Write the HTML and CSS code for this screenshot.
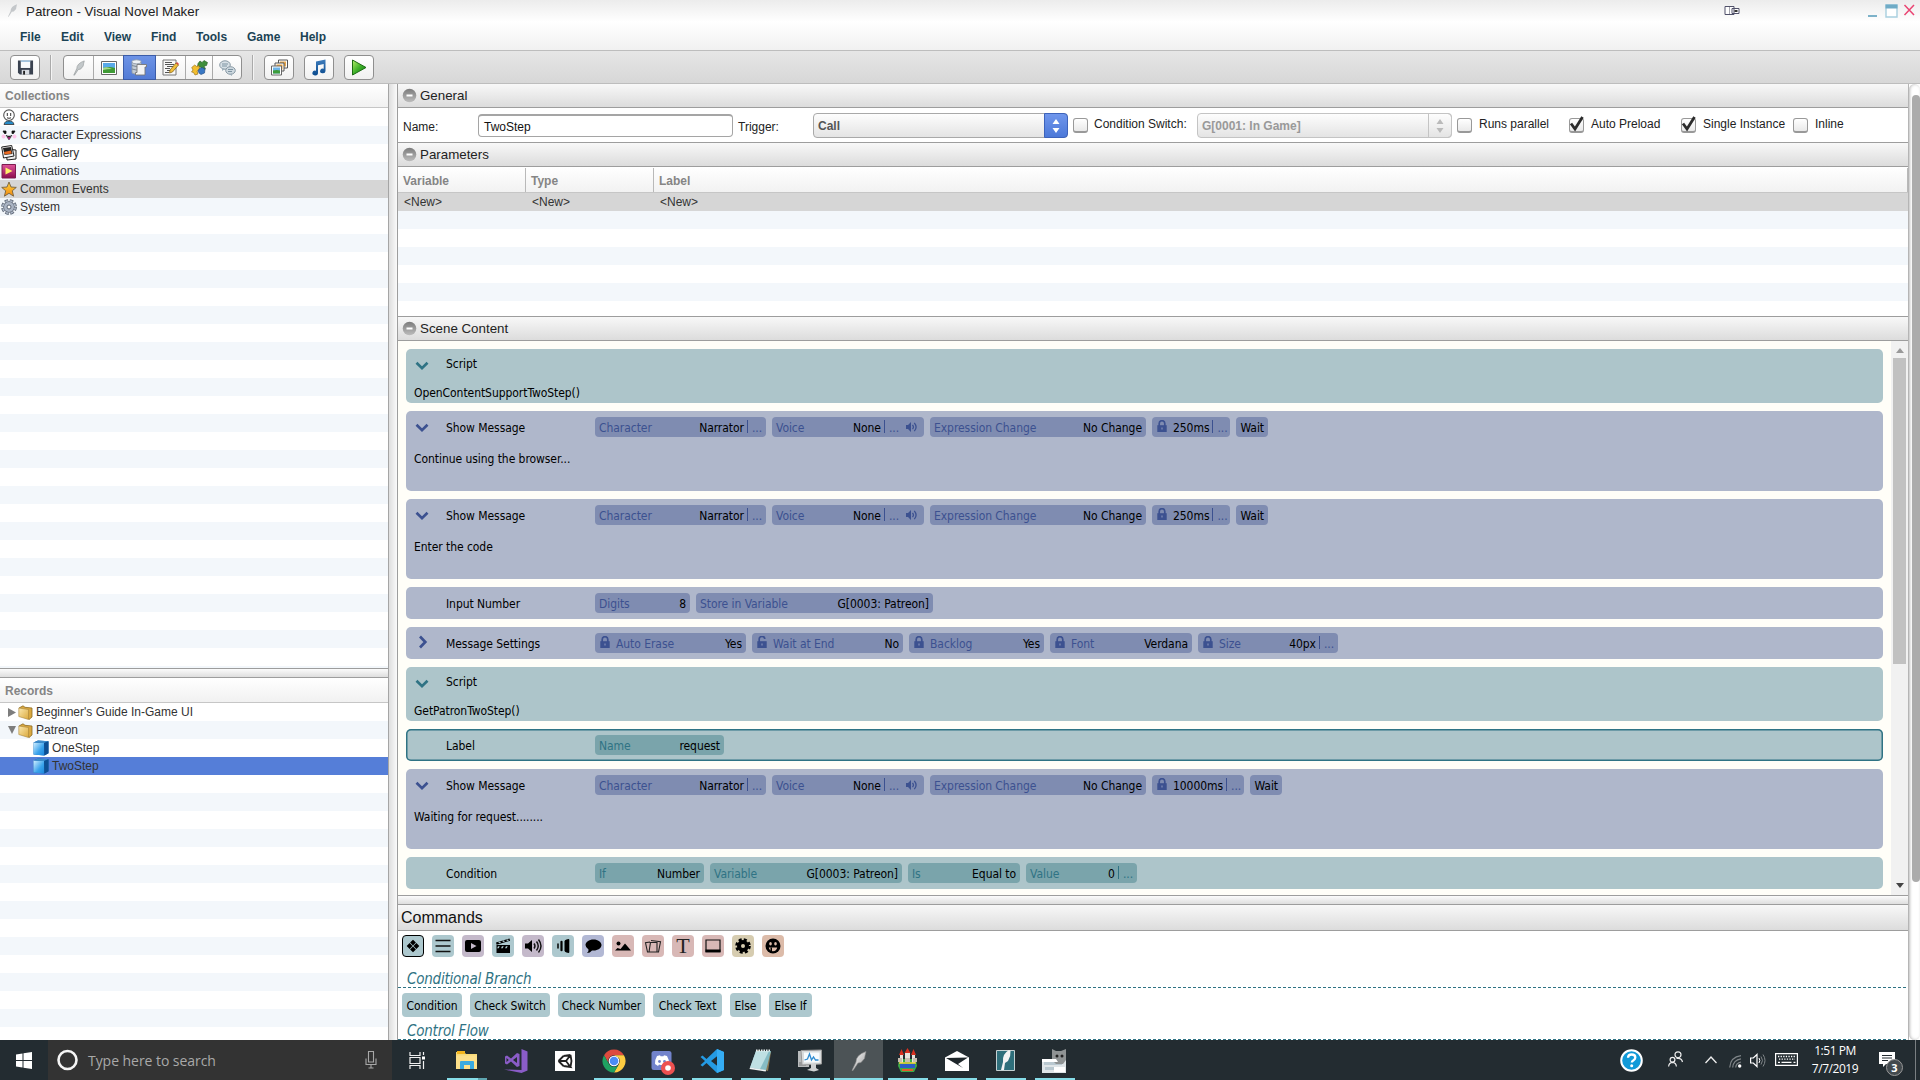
FILE: index.html
```
<!DOCTYPE html>
<html lang="en">
<head>
<meta charset="utf-8">
<title>Patreon - Visual Novel Maker</title>
<link rel="stylesheet" href="styles.css">
</head>
<body>
<svg class="defs" width="0" height="0">
  <defs>
    <linearGradient id="g-play" x1="0" y1="0" x2="1" y2="1"><stop offset="0" stop-color="#b6f06a"/><stop offset=".5" stop-color="#3fb12a"/><stop offset="1" stop-color="#0d7a10"/></linearGradient>
    <linearGradient id="g-note" x1="0" y1="0" x2="0" y2="1"><stop offset="0" stop-color="#3f7dbd"/><stop offset="1" stop-color="#0a4b8e"/></linearGradient>
    <linearGradient id="g-cube" x1="0" y1="0" x2="1" y2="1"><stop offset="0" stop-color="#d3efff"/><stop offset=".6" stop-color="#3aa3ec"/><stop offset="1" stop-color="#1c86dc"/></linearGradient>
    <linearGradient id="g-folder" x1="0" y1="0" x2="1" y2="1"><stop offset="0" stop-color="#fbe9b0"/><stop offset="1" stop-color="#dba93c"/></linearGradient>
    <linearGradient id="g-anim" x1="0" y1="0" x2="0" y2="1"><stop offset="0" stop-color="#e0559b"/><stop offset="1" stop-color="#8c0d4e"/></linearGradient>
    <linearGradient id="g-star" x1="0" y1="0" x2="0" y2="1"><stop offset="0" stop-color="#ffd23c"/><stop offset="1" stop-color="#f18a12"/></linearGradient>
    <linearGradient id="g-feather" x1="0" y1="0" x2="1" y2="1"><stop offset="0" stop-color="#fff"/><stop offset="1" stop-color="#9a9a9a"/></linearGradient>
    <linearGradient id="g-minus" x1="0" y1="0" x2="0" y2="1"><stop offset="0" stop-color="#7b7b7b"/><stop offset="1" stop-color="#bdbdbd"/></linearGradient>
  </defs>
  <symbol id="chev-down" viewBox="0 0 14 10"><path d="M1.500 1.800 7 7.200l5.500-5.400" fill="none" stroke="currentColor" stroke-width="2.700"/></symbol>
  <symbol id="chev-right" viewBox="0 0 10 14"><path d="M2 1.500 7.300 7 2 12.500" fill="none" stroke="currentColor" stroke-width="2.700"/></symbol>
  <symbol id="lock" viewBox="0 0 10 12"><path d="M2.200 6V3.500a2.800 2.800 0 0 1 5.600 0V6" fill="none" stroke="currentColor" stroke-width="1.700"/><path d="M.3 5.200h9.400V12H.3z" fill="currentColor"/><path d="M4.500 7.500h1v2h-1z" fill="#8f9bc0"/></symbol>
  <symbol id="unlock" viewBox="0 0 10 12"><path d="M2.200 6V3.500a2.800 2.800 0 0 1 5.600-.5" fill="none" stroke="currentColor" stroke-width="1.700"/><path d="M.3 5.200h9.400V12H.3z" fill="currentColor"/><path d="M4.500 7.500h1v2h-1z" fill="#8f9bc0"/></symbol>
  <symbol id="sound" viewBox="0 0 12 12"><path d="M0 4h2l3-3v10L2 8H0z" fill="currentColor"/><path d="M6.500 3.800q1.800 2.200 0 4.400M8.300 1.800q3.600 4.200 0 8.400" fill="none" stroke="currentColor" stroke-width="1.300"/></symbol>
  <symbol id="minus" viewBox="0 0 15 15"><circle cx="7.500" cy="7.500" r="6.800" fill="url(#g-minus)"/><rect x="4.500" y="6.500" width="6" height="2" fill="#fff"/></symbol>
  <symbol id="check" viewBox="0 0 18 20"><path d="M4 9.500 8 15 15.500 3" fill="none" stroke="#2b2b2b" stroke-width="2.800"/></symbol>
  <symbol id="feather" viewBox="0 0 16 20"><path d="M1 19.500 5 11q0-7 10-10.500-1 4-1.500 7l-3.500 4-3 .5-5 7.500z" fill="url(#g-feather)" stroke="#8b8b8b" stroke-width=".6"/></symbol>
  <symbol id="folder" viewBox="0 0 15 15"><path d="M1 3 5 .8l2 1.500 7 .7V12l-3 2.500z" fill="#d9a840" stroke="#8b6a22" stroke-width=".8"/><path d="M.8 3 10.500 4.500v10L.8 11.500z" fill="url(#g-folder)" stroke="#a8853a" stroke-width=".6"/></symbol>
  <symbol id="cube" viewBox="0 0 16 16"><path d="M.5 2.500 5 .5l10.500.8v12L11.500 15.500.5 14.500z" fill="#1766ad"/><path d="M.5 2.500 11 3v12.500L.5 14.500z" fill="url(#g-cube)"/><path d="M.5 2.500 5 .5l10.500.8L11 3z" fill="#3c8ccc"/><path d="M11 3l4.500-1.700v12L11.500 15.500z" fill="#0d4f93"/></symbol>
</svg>

<div class="window">
  <header class="titlebar">
    <svg class="app-icon" width="11" height="13" viewBox="0 0 16 20"><path d="M1 19.500 5 11q0-7 10-10.500-1 4-1.500 7l-3.500 4-3 .5-5 7.500z" fill="#c4c7ca"/></svg>
    <span class="title">Patreon - Visual Novel Maker</span>
    <svg class="tablet" width="16" height="11" viewBox="0 0 16 11"><path d="M1 1.500h9v8H1zM8 3.500h7v5H8z" fill="#fff" stroke="#50516a"/><path d="M5.500 2v7" stroke="#a5a5ae"/><path d="M10.500 5h3v2h-3z" fill="#333"/></svg>
    <svg class="winbtns" width="48" height="14" viewBox="0 0 48 14"><path d="M1 11h9v2H1z" fill="#7db2c9"/><path d="M19 1h11v12H19z" fill="#fff" stroke="#a8cfdf" stroke-width="1.400"/><path d="M18.500.5h12v4h-12z" fill="#6fabc6"/><path d="M37.500 1 47 11M47 1l-9.500 10" stroke="#ea4472" stroke-width="1.500"/></svg>
  </header>
  <nav class="menubar"><span class="m-file">File</span><span class="m-edit">Edit</span><span class="m-view">View</span><span class="m-find">Find</span><span class="m-tools">Tools</span><span class="m-game">Game</span><span>Help</span></nav>

  <div class="toolbar">
    <button class="tbtn"><svg width="17" height="17" viewBox="0 0 18 17"><path d="M1 1h16v15H3l-2-2z" fill="#3a4250"/><path d="M4 1h10v8H4z" fill="#f7f9fb"/><path d="M4 1h10v1.500H4z" fill="#8fb7d8"/><path d="M5 11h8v5H5z" fill="#d8dce2"/><path d="M6.500 12h2v4h-2z" fill="#222"/></svg></button>
    <i class="sep"></i>
    <div class="tgroup">
      <button><svg width="12" height="16" viewBox="0 0 16 20"><path d="M1 19.500 5 11q0-7 10-10.500-1 4-1.500 7l-3.500 4-3 .5-5 7.500z" fill="#c3c8ca" stroke="#8e9396" stroke-width=".8"/></svg></button>
      <button><svg width="16" height="14" viewBox="0 0 16 14"><path d="M.5.500h15v13H.5z" fill="#fff" stroke="#666"/><path d="M2 2h12v10H2z" fill="#58a9e8"/><path d="M2 7q6-2 12 0v5H2z" fill="#3f9a35"/><path d="M2 7q4-2 9 1-5 0-9 1z" fill="#a8d98c"/></svg></button>
      <button class="on"><svg width="16" height="17" viewBox="0 0 16 17"><path d="M1 3v11q4 2.500 9 0V3z" fill="#c3cbd4" stroke="#8e99a6" stroke-width=".8"/><ellipse cx="5.500" cy="2.800" rx="4.600" ry="2" fill="#edf1f5" stroke="#8e99a6" stroke-width=".8"/><path d="M1 6.500q4 2 9 0M1 10q4 2 9 0" fill="none" stroke="#7d8894"/><path d="M6 5.500h9.500V8H14v8H4.500v-2.500H6z" fill="#f3f3f3" stroke="#777" stroke-width=".9"/></svg></button>
      <button><svg width="17" height="17" viewBox="0 0 17 17"><path d="M1 1h13v15H1z" fill="#f8f8f8" stroke="#777"/><path d="M3 3.500h7M3 5.500h9M5 7.500h7M3 9.500h5M5 11.500h4M3 13.500h4" stroke="#555"/><path d="m8 11 6-7 2.500 2-6 7-3 1z" fill="#f1bf3b" stroke="#7b5a16" stroke-width=".7"/><path d="m14 4 1-1 2 2-.8 1z" fill="#d44"/></svg></button>
      <button><svg width="17" height="16" viewBox="0 0 17 16"><path d="M7 3.500 9 1l2 1.500L13 .5l3.500 2-1 3L13 6l1.500 3-3 1-2-3-3 0z" fill="#3f8f3c" stroke="#245a22" stroke-width=".6"/><path d="m.7 7.500 3-2.500 2 1.500L8 5.500l.5 4L6 11l1 3-3 1-1.500-2.500-2-.5L2 10z" fill="#f2be2f" stroke="#8a6510" stroke-width=".6"/><path d="m8 9 3-1.500 3 1.500-.5 4L10 14.500 8 13l-.800-2z" fill="#3978c4" stroke="#1d4780" stroke-width=".6"/></svg></button>
      <button><svg width="17" height="16" viewBox="0 0 17 16"><ellipse cx="6" cy="5" rx="5.300" ry="4.200" fill="#d7e0e6" stroke="#8a9aa5"/><path d="M3 8v3l3-2z" fill="#9fb0bb"/><path d="M3 4h6M3 6h5" stroke="#7d93a1"/><ellipse cx="11.500" cy="10.500" rx="4.800" ry="3.800" fill="#cdd8df" stroke="#8a9aa5"/><path d="M13 13.500v2.500l-3-2z" fill="#9fb0bb"/><path d="M9 9.500h5M9 11.500h4" stroke="#7d93a1"/></svg></button>
    </div>
    <i class="sep sep2"></i>
    <button class="tbtn"><svg width="17" height="17" viewBox="0 0 17 17"><path d="M7.500 1h9v8h-9z" fill="#fff" stroke="#555"/><path d="M9 2.500h6v5H9z" fill="#e8a94e"/><path d="M4 4h9v8H4z" fill="#fff" stroke="#555"/><path d="M5.500 5.500h6v5h-6z" fill="#f0a53a"/><path d="M.5 7h10v9H.5z" fill="#fff" stroke="#666"/><path d="M2 8.500h7v6H2z" fill="#6db5e8"/><path d="M2 11.500q4-1 7 0v3H2z" fill="#3e9c3b"/></svg></button>
    <button class="tbtn"><svg width="16" height="17" viewBox="0 0 16 17"><path d="M5 2.500 14.500.5v11.500a2.700 2.300 0 1 1-1.800-2.200V5L7 6.200V14a2.800 2.400 0 1 1-2-2.300z" fill="url(#g-note)"/></svg></button>
    <button class="tbtn"><svg width="16" height="17" viewBox="0 0 16 17"><path d="M1.500 1 15 8.500 1.500 16z" fill="url(#g-play)" stroke="#1c6b14"/></svg></button>
  </div>

  <div class="body">
    <aside class="left">
      <div class="lhead">Collections</div>
      <ul class="list collections">
        <li><svg width="16" height="16" viewBox="0 0 16 16"><path d="M3 15.500q1-4 5-3.500 4-.5 5 3.500z" fill="#258bc8" stroke="#333" stroke-width=".8"/><circle cx="8" cy="6.200" r="5.300" fill="#fff" stroke="#555" stroke-width="1.100"/><path d="M6.300 4v3M9.700 4v3M6 8.800q2 1 4 0" stroke="#333" fill="none"/></svg>Characters</li>
        <li><svg width="16" height="16" viewBox="0 0 16 16"><circle cx="2.500" cy="9.500" r="2" fill="#ffc5ea"/><circle cx="13.500" cy="9.500" r="2" fill="#ffc5ea"/><path d="M2 4l1.500 2.500h1.500V4zM14 4l-1.500 2.500H11V4z" fill="#111" stroke="#111" stroke-width=".8"/><path d="M5 8.500q3 2 6 0" fill="none" stroke="#222" stroke-width="1.300"/><path d="M6 10h4l-2 3z" fill="#b1197d" stroke="#333" stroke-width=".5"/></svg>Character Expressions</li>
        <li><svg width="16" height="16" viewBox="0 0 16 16"><path d="m5 4 10 1v9L6 15z" fill="#eee" stroke="#222"/><path d="m.7 2 10-1.500L13 11 2.500 13z" fill="#f6f6f6" stroke="#222"/><path d="m2 3 8-1 1.500 7L3.500 10z" fill="#222"/><path d="m3 7 7-1.500.7 3-7 1z" fill="#e96a22"/></svg>CG Gallery</li>
        <li><svg width="16" height="16" viewBox="0 0 16 16"><path d="M1 1.500h13.500V15H1z" fill="url(#g-anim)" stroke="#7d1c50"/><path d="M4.500 4.500 11.500 8l-7 3.500z" fill="#fff06a"/></svg>Animations</li>
        <li class="sel"><svg width="16" height="16" viewBox="0 0 16 16"><path d="m8 1 2 5 5.300.4-4 3.400 1.300 5.400L8 12.300l-4.600 2.900 1.300-5.400-4-3.400L6 6z" fill="url(#g-star)" stroke="#75613d" stroke-width=".9"/></svg>Common Events</li>
        <li><svg width="16" height="16" viewBox="0 0 16 16"><circle cx="8" cy="8" r="6.200" fill="none" stroke="#5c6573" stroke-width="3.400" stroke-dasharray="3.300 1.570"/><circle cx="8" cy="8" r="5.800" fill="#5c6573"/><circle cx="8" cy="8" r="6.200" fill="none" stroke="#aab4c4" stroke-width="1.800" stroke-dasharray="2.300 2.570" stroke-dashoffset="-.5"/><circle cx="8" cy="8" r="5" fill="#aab4c4"/><circle cx="8" cy="8" r="2" fill="#fff" stroke="#5c6573"/></svg>System</li>
      </ul>
      <div class="hsplit"></div>
      <div class="lhead rec">Records</div>
      <ul class="list records">
        <li><svg class="tri" width="8" height="9" viewBox="0 0 8 9"><path d="M0 0 8 4.500 0 9z" fill="#7d7d7d"/></svg><svg width="15" height="15"><use href="#folder"/></svg><span>Beginner's Guide In-Game UI</span></li>
        <li><svg class="tri" width="8" height="8" viewBox="0 0 8 8"><path d="M0 0h8L4 8z" fill="#7d7d7d"/></svg><svg width="15" height="15"><use href="#folder"/></svg><span>Patreon</span></li>
        <li class="leaf"><svg width="16" height="16"><use href="#cube"/></svg>OneStep</li>
        <li class="leaf cur"><svg width="16" height="16"><use href="#cube"/></svg>TwoStep</li>
      </ul>
    </aside>
    <div class="vsplit"></div>

    <main class="main">
      <div class="sect"><svg width="15" height="15"><use href="#minus"/></svg>General</div>
      <div class="general">
        <label class="g-name">Name:</label><div class="input">TwoStep</div>
        <label class="g-trig">Trigger:</label>
        <div class="select"><span>Call</span><b><svg width="8" height="14" viewBox="0 0 8 14"><path d="M4 0 7.500 5h-7zM4 14 .5 9h7z" fill="#fff"/></svg></b></div>
        <i class="cb c1"></i><label class="g-cond">Condition Switch:</label>
        <div class="select off"><span>G[0001: In Game]</span><b><svg width="8" height="14" viewBox="0 0 8 14"><path d="M4 0 7.500 5h-7zM4 14 .5 9h7z" fill="#bababa"/></svg></b></div>
        <i class="cb"></i><label class="g-run">Runs parallel</label>
        <i class="cb"><svg width="18" height="20"><use href="#check"/></svg></i><label class="g-auto">Auto Preload</label>
        <i class="cb"><svg width="18" height="20"><use href="#check"/></svg></i><label class="g-single">Single Instance</label>
        <i class="cb"></i><label>Inline</label>
      </div>
      <div class="sect"><svg width="15" height="15"><use href="#minus"/></svg>Parameters</div>
      <div class="thead"><span>Variable</span><span>Type</span><span>Label</span></div>
      <div class="tbody"><div class="trow"><span>&lt;New&gt;</span><span>&lt;New&gt;</span><span>&lt;New&gt;</span></div></div>
      <div class="sect"><svg width="15" height="15"><use href="#minus"/></svg>Scene Content</div>
      <div class="scene">
        <div class="blocks">
          <section class="blk teal script"><div class="line"><svg class="chev" width="14" height="10"><use href="#chev-down"/></svg><span class="cmd">Script</span></div><p>OpenContentSupportTwoStep()</p></section>
          <section class="blk msg"><div class="line"><svg class="chev" width="14" height="10"><use href="#chev-down"/></svg><span class="cmd">Show Message</span>
            <span class="chip w171"><em>Character</em><b>Narrator</b><u>...</u></span><span class="chip w152"><em>Voice</em><b>None</b><u>...</u><svg class="snd" width="12" height="12"><use href="#sound"/></svg></span><span class="chip w216"><em>Expression Change</em><b>No Change</b></span><span class="chip w78"><svg width="10" height="12"><use href="#lock"/></svg><b>250ms</b><u>...</u></span><span class="chip w32"><b>Wait</b></span></div><p>Continue using the browser...</p></section>
          <section class="blk msg"><div class="line"><svg class="chev" width="14" height="10"><use href="#chev-down"/></svg><span class="cmd">Show Message</span>
            <span class="chip w171"><em>Character</em><b>Narrator</b><u>...</u></span><span class="chip w152"><em>Voice</em><b>None</b><u>...</u><svg class="snd" width="12" height="12"><use href="#sound"/></svg></span><span class="chip w216"><em>Expression Change</em><b>No Change</b></span><span class="chip w78"><svg width="10" height="12"><use href="#lock"/></svg><b>250ms</b><u>...</u></span><span class="chip w32"><b>Wait</b></span></div><p>Enter the code</p></section>
          <section class="blk"><div class="line"><i class="chev"></i><span class="cmd">Input Number</span><span class="chip w95"><em>Digits</em><b>8</b></span><span class="chip w237"><em>Store in Variable</em><b>G[0003: Patreon]</b></span></div></section>
          <section class="blk"><div class="line"><svg class="chev right" width="14" height="14" viewBox="-3 0 14 14"><use href="#chev-right" width="10" height="14"/></svg><span class="cmd">Message Settings</span><span class="chip w151"><svg width="10" height="12"><use href="#lock"/></svg><em>Auto Erase</em><b>Yes</b></span><span class="chip w151"><svg width="10" height="12"><use href="#unlock"/></svg><em>Wait at End</em><b>No</b></span><span class="chip w135"><svg width="10" height="12"><use href="#lock"/></svg><em>Backlog</em><b>Yes</b></span><span class="chip w142"><svg width="10" height="12"><use href="#lock"/></svg><em>Font</em><b>Verdana</b></span><span class="chip w140"><svg width="10" height="12"><use href="#lock"/></svg><em>Size</em><b>40px</b><u>...</u></span></div></section>
          <section class="blk teal script"><div class="line"><svg class="chev" width="14" height="10"><use href="#chev-down"/></svg><span class="cmd">Script</span></div><p>GetPatronTwoStep()</p></section>
          <section class="blk teal picked"><div class="line"><i class="chev"></i><span class="cmd">Label</span><span class="chip w129"><em>Name</em><b>request</b></span></div></section>
          <section class="blk msg"><div class="line"><svg class="chev" width="14" height="10"><use href="#chev-down"/></svg><span class="cmd">Show Message</span>
            <span class="chip w171"><em>Character</em><b>Narrator</b><u>...</u></span><span class="chip w152"><em>Voice</em><b>None</b><u>...</u><svg class="snd" width="12" height="12"><use href="#sound"/></svg></span><span class="chip w216"><em>Expression Change</em><b>No Change</b></span><span class="chip w92"><svg width="10" height="12"><use href="#lock"/></svg><b>10000ms</b><u>...</u></span><span class="chip w32"><b>Wait</b></span></div><p>Waiting for request........</p></section>
          <section class="blk teal"><div class="line"><i class="chev"></i><span class="cmd">Condition</span><span class="chip w109"><em>If</em><b>Number</b></span><span class="chip w191"><em>Variable</em><b>G[0003: Patreon]</b></span><span class="chip w113"><em>Is</em><b>Equal to</b></span><span class="chip w111"><em>Value</em><b>0</b><u>...</u></span></div></section>
        </div>
        <div class="vbar"><svg width="8" height="5" viewBox="0 0 8 5"><path d="M0 5 4 0l4 5z" fill="#999"/></svg><i></i><svg width="8" height="5" viewBox="0 0 8 5"><path d="M0 0h8L4 5z" fill="#444"/></svg></div>
      </div>
      <div class="hsplit"></div>
      <div class="sect cmdhead">Commands</div>
      <div class="cmds">
        <div class="icons">
          <span class="ic t act"><svg width="16" height="16" viewBox="0 0 16 16"><path d="m8 1.700 2.900 2.900L8 7.500 5.100 4.600zM8 8.500l2.900 2.900L8 14.300l-2.900-2.900zM4.600 5.100 7.500 8l-2.900 2.900L1.700 8zM11.400 5.100 14.300 8l-2.900 2.900L8.500 8z"/></svg></span>
          <span class="ic t"><svg width="16" height="16" viewBox="0 0 16 16"><path d="M.5 2.500h15M.5 8h15M.5 13.500h15" stroke="#111" stroke-width="1.500"/></svg></span>
          <span class="ic p"><svg width="16" height="16" viewBox="0 0 16 16"><path fill-rule="evenodd" d="M2 2h12q2 0 2 2v8q0 2-2 2H2q-2 0-2-2V4q0-2 2-2zm4 3v6l5.500-3z"/></svg></span>
          <span class="ic t"><svg width="16" height="16" viewBox="0 0 16 16"><path fill-rule="evenodd" d="m1 4.500 13.500-4 .6 2.300-13.500 4zm2.200-.2 1 1 1.800-.5-1-1zm4-1.200 1 1 1.800-.5-1-1zm4-1.200 1 1 1.800-.5-1-1zM1.500 7H15v8H1.500zM3 8.300l-.8 2 1.500 0 1-2zm4 0-1 2h1.700l1-2zm4 0-1 2h1.700l1-2z"/></svg></span>
          <span class="ic p"><svg width="17" height="16" viewBox="0 0 17 16"><path d="M0 5.500h3l4-3.500v12l-4-3.500H0z"/><path d="M9 5.500q2 2.500 0 5M11.500 3.500q3.500 4.500 0 9M13.500 1.500q5 6.500 0 13" fill="none" stroke="#111" stroke-width="1.400"/></svg></span>
          <span class="ic t"><svg width="14" height="16" viewBox="0 0 14 16"><path d="M8.500 3.500q0-1.500 2-2l2-.5q.8 0 .8 1v12q0 1-.8 1l-2-.5q-2-.5-2-2z"/><path d="M5.500 3.800v8.400" stroke="#000" stroke-width="2.200" stroke-linecap="round"/><path d="M2 6v4" stroke="#000" stroke-width="1.500" stroke-linecap="round"/></svg></span>
          <span class="ic b"><svg width="17" height="16" viewBox="0 0 17 16"><path d="M8.500 1.500C13 1.500 16.500 4 16.500 7s-3.500 5.500-8 5.500l-1.500 0q-2 2.500-5 2.500 2-2 1.500-3.500Q.5 9.500.5 7c0-3 3.500-5.500 8-5.500z"/></svg></span>
          <span class="ic r"><svg width="16" height="16" viewBox="0 0 16 16"><circle cx="3.500" cy="5.500" r="2"/><path d="M0 12.500 2.500 10l3 1L10 5.500l6 7z"/></svg></span>
          <span class="ic r"><svg width="16" height="16" viewBox="0 0 16 16"><path d="m5 4-4.500.8L2.500 14H5M5.500 4.500h6.500v9.500H4zM6 2.500l9.500 1.300-2 10.200H12" fill="none" stroke="#222" stroke-width="1.100"/></svg></span>
          <span class="ic r letter">T</span>
          <span class="ic r"><svg width="16" height="16" viewBox="0 0 16 16"><path d="M1 2h14v12H1z" fill="none" stroke="#111" stroke-width="1.200"/><path d="M.5 11.500h15V14H.5z"/></svg></span>
          <span class="ic y"><svg width="16" height="16" viewBox="0 0 16 16"><circle cx="8" cy="8" r="6.500" fill="none" stroke="#000" stroke-width="2.600" stroke-dasharray="3 2.105"/><circle cx="8" cy="8" r="4" fill="none" stroke="#000" stroke-width="4"/></svg></span>
          <span class="ic o"><svg width="16" height="16" viewBox="0 0 16 16"><circle cx="8" cy="8" r="7.500"/><ellipse cx="5.500" cy="5.800" rx="1.300" ry="1.800" fill="#dcbba9"/><ellipse cx="10.500" cy="5.800" rx="1.300" ry="1.800" fill="#dcbba9"/><path d="M3.800 9.500h8.400q-.7 3.700-4.200 3.700t-4.200-3.700z" fill="#dcbba9"/><path d="M5.500 9.500h1.500v4H5.500z"/></svg></span>
        </div>
        <h2 class="cat1">Conditional Branch</h2>
        <div class="btns"><button class="b60">Condition</button><button class="b80">Check Switch</button><button class="b87">Check Number</button><button class="b69">Check Text</button><button class="b31">Else</button><button class="b43">Else If</button></div>
        <h2 class="cat2">Control Flow</h2>
      </div>
    </main>
    <div class="outer"><i></i></div>
  </div>

  <footer class="taskbar">
    <div class="start"><svg width="16" height="17" viewBox="0 0 16 17"><path d="M0 2.400 6.500 1.500V8H0zM7.500 1.300 16 0v8H7.500zM0 9h6.500v6.500L0 14.600zM7.500 9H16v8l-8.500-1.300z" fill="#fff"/></svg></div>
    <div class="search"><svg width="23" height="24" viewBox="0 0 23 24"><circle cx="11.500" cy="12" r="9" fill="none" stroke="#f5f5f5" stroke-width="2.600"/></svg><span>Type here to search</span><svg width="12" height="18" viewBox="0 0 12 18"><path d="M3.500.5h5v10.500h-5zM1 7.500v6h10v-6M6 13.500V17M3.500 17h5" fill="none" stroke="#a8a8a8" stroke-width="1.100"/></svg></div>
    <div class="app tv"><svg width="17" height="17" viewBox="0 0 17 17"><path d="M1 0v3.500h10V0M1 17v-3.500h10V17M1 5.500h10v6H1zM14.500 0v3M14.500 9v8" fill="none" stroke="#f0f0f0" stroke-width="1.200"/><path d="M13 4.500h3v3h-3z" fill="#fff"/></svg></div>
    <div class="app run multi"><svg width="22" height="19" viewBox="0 0 22 19"><path d="M0 1h8l2 2h11v15H0z" fill="#f7d978"/><path d="M1 0h8v3H1z" fill="#f3b51d"/><path d="M0 4.500h21V18H0z" fill="#fde08a"/><path d="M4 18v-7q0-1 1-1h12q1 0 1 1v7h-4v-4H8v4z" fill="#3aaae0"/></svg></div>
    <div class="app"><svg width="24" height="24" viewBox="0 0 24 24"><path d="M17.500 0 23.500 2.500v19L17.500 24 0 20.500l17.500.5z" fill="#8a5cc7"/><path fill-rule="evenodd" d="M1 7.500 3 6.500l4 3L13 4l2.500 1v12L13 18l-6-5.500-4 3-2-1zM2.500 9v4L4.800 11zM13 8l-4 3 4 3z" fill="#8a5cc7"/></svg></div>
    <div class="app"><svg width="20" height="20" viewBox="0 0 20 20"><path d="M0 0h20v20H0z" fill="#fff"/><path d="m3.500 10 5-5M3.500 10l5 5M3.500 10H11M15.500 4l-7 1M15.500 4l1 6-1 6M15.500 4 11 10l4.500 6-7-1" fill="none" stroke="#222" stroke-width="1.800"/></svg></div>
    <div class="app run"><svg width="24" height="24" viewBox="0 0 24 24"><path d="M2.040 6.250A11.500 11.500 0 0 1 21.960 6.250H12a5.750 5.750 0 0 0-5 8.600z" fill="#dd4b3e"/><path d="M21.960 6.250A11.500 11.500 0 0 1 12 23.500l5-8.600a5.750 5.750 0 0 0 0-5.800l-5-2.850z" fill="#fecd41"/><path d="M2.040 6.250 7 14.900a5.750 5.750 0 0 0 10 0L12 23.500A11.500 11.500 0 0 1 2.040 6.250z" fill="#1fa261"/><circle cx="12" cy="12" r="5.300" fill="#fff"/><circle cx="12" cy="12" r="4.300" fill="#4b8bf5"/></svg></div>
    <div class="app run"><svg class="low" width="24" height="25" viewBox="0 0 24 25"><rect x=".5" y="1" width="20" height="19" rx="2.500" fill="#7283cc"/><path d="M4 14q0-5 2-8l3-.800.6 1h2.800l.6-1 3 .8q2 3 2 8l-3 2-1-1.500q-3 1-6 0L7 16z" fill="#fff"/><circle cx="8.500" cy="11.500" r="1.400" fill="#7283cc"/><circle cx="13.500" cy="11.500" r="1.400" fill="#7283cc"/><circle cx="17" cy="18" r="7" fill="#ed5050"/><circle cx="17" cy="18" r="2.800" fill="#fff"/></svg></div>
    <div class="app run"><svg width="24" height="24" viewBox="0 0 24 24"><path d="M17 0 24 3v18l-7 3L6.500 14 2.500 17.500.5 16 5 12 .5 8l2-1.500 4 3.500zm1 6.500L11 12l7 5.500z" fill="#249be4" fill-rule="evenodd"/><path d="M17 0 24 3v18l-7 3z" fill="#35adf4"/></svg></div>
    <div class="app run"><svg width="23" height="24" viewBox="0 0 23 24"><path d="m7 1 15 2-3 19-3-1z" fill="#8b7a55"/><path d="M7 2h15l-5 19.500L1 19z" fill="#86bcc4"/><path d="M7 2h13L11 20 1 18.500z" fill="#bfe0e3"/><path d="M1 18.500 17 21l-.3 1.500L.5 20z" fill="#f0f3f3"/><path d="M7 1.500h14" stroke="#e8eff0" stroke-width="2" stroke-dasharray="1.500 1"/></svg></div>
    <div class="app run"><svg width="24" height="23" viewBox="0 0 24 23"><path d="M0 2h11v16H0z" fill="#b9bcbd"/><path d="M1 14h9M1 16h7" stroke="#777"/><path d="M3 1.500 23.500 1v14L4 16z" fill="#d8dbdc" stroke="#999"/><path d="M6 3.500h15.500v10H6z" fill="#f7fbfd"/><path d="m6.500 11 3-1 2-5 2 6 2-3 2 3h3" fill="none" stroke="#2e8bd0" stroke-width="1.300"/><path d="M13 15h5v4l3 2-5 1.500L9 21l4-2z" fill="#cfd1d2"/></svg></div>
    <div class="app run active"><svg width="16" height="20"><use href="#feather"/></svg></div>
    <div class="app run"><svg width="23" height="24" viewBox="0 0 23 24"><path d="M3 10h17l1 7-3 6H5l-3-6z" fill="#3aa84a"/><path d="M4 5h3v9H4zM9 3h5v9H9zM16 5h3v9h-3z" fill="#e8e4dc"/><path d="M3 6 5.500 0 8 6zM8.500 4 11.500-1l3 5zM15 6l2.500-6L20 6z" fill="#d8301f"/><path d="M2 9h4v4H2zM17 9h4v4h-4zM9 9h5v4H9z" fill="#c8bdb0"/><path d="M4 15h15v4H4z" fill="#2c5cc5"/><path d="M3 14h17" stroke="#f0d13a" stroke-width="1.500"/><path d="M6 20h11v2H6z" fill="#e45a2a"/></svg></div>
    <div class="app run"><svg width="24" height="20" viewBox="0 0 24 20"><path d="M12 0 24 6.500V20H0V6.500z" fill="#fff"/><path d="M1 7 23 6.500 13 13l5 4z" fill="#1f272b"/></svg></div>
    <div class="app run"><svg width="19" height="21" viewBox="0 0 19 21"><path d="M.5.500h18v20H.5z" fill="#2f6f7b" stroke="#c5d0d2"/><path d="M5 20 7 12Q6 4 13 0l1.500 1q.5 5-2.500 10l-3 2-1 7z" fill="#f3f3f3"/></svg></div>
    <div class="app run"><svg width="25" height="24" viewBox="0 0 25 24"><path d="M0 10h24v14H0z" fill="#dfe5e8"/><path d="M2 13h18v3H2zM3 18h12v3H3z" fill="#b9c8d0"/><path d="M10 4V0l4 2h5l5-2v11l-3 4h-7l-4-4z" fill="#8f9394"/><circle cx="15" cy="7" r="1.500" fill="#222"/><circle cx="20" cy="7" r="1.500" fill="#222"/><path d="M0 10h14l2 3H0zM12 18l11 0v5H12z" fill="#fff"/></svg></div>
    <div class="tray">
      <svg class="t-help" width="23" height="23" viewBox="0 0 23 23"><circle cx="11.500" cy="11.500" r="10.300" fill="#129ad8" stroke="#fff" stroke-width="2"/><path d="M8 8.800q.2-3.300 3.700-3.300 3.600 0 3.600 3 0 1.500-1.800 2.700-1.700 1-1.700 2.300" fill="none" stroke="#fff" stroke-width="2.300"/><circle cx="11.700" cy="16.700" r="1.500" fill="#fff"/></svg>
      <svg class="t-people" width="15" height="16" viewBox="0 0 15 16"><circle cx="10" cy="3.800" r="3" fill="none" stroke="#eee" stroke-width="1.200"/><circle cx="4.500" cy="8.800" r="2.400" fill="none" stroke="#eee" stroke-width="1.200"/><path d="M.6 15.500q.4-4 3.900-4.200 3.500.2 3.900 4.200M8.500 7.500q5-1 6 3.500" fill="none" stroke="#eee" stroke-width="1.200"/></svg>
      <svg class="t-up" width="12" height="8" viewBox="0 0 12 8"><path d="m.5 7 5.500-6 5.500 6" fill="none" stroke="#eee" stroke-width="1.300"/></svg>
      <svg class="t-wifi" width="13" height="13" viewBox="0 0 13 13"><path d="M.7 12.500Q1.500 2 12 .7M3.700 12.500Q4.200 5 12 3.800M6.700 12.500Q7 8 12 7" fill="none" stroke="#7f8588" stroke-width="1.200"/><circle cx="10.700" cy="11" r="1.700" fill="#fff"/></svg>
      <svg class="t-snd" width="16" height="15" viewBox="0 0 16 15"><path d="M.6 5h2.700L7 1.500v12L3.300 10H.6z" fill="none" stroke="#fff" stroke-width="1.200"/><path d="M9 5q1.600 2.500 0 5" fill="none" stroke="#fff"/><path d="M11 3.500q3 4 0 8M13 1.500q4 6 0 12" fill="none" stroke="#7f8588"/></svg>
      <svg class="t-kbd" width="23" height="13" viewBox="0 0 23 13"><path d="M.6.600h21.800v11.800H.6z" fill="none" stroke="#fff" stroke-width="1.200"/><path d="M3 3.500h17.500M4 6.200h16" stroke="#fff" stroke-width="1.300" stroke-dasharray="1.300 1.300"/><path d="M3 9.300h2M6.500 9.300h10M18.500 9.300h2" stroke="#fff" stroke-width="1.200"/></svg>
      <div class="clock"><span>1:51 PM</span><span>7/7/2019</span></div>
      <div class="note"><svg width="16" height="15" viewBox="0 0 16 15"><path d="M0 0h16v12h-9l-3 3v-3H0z" fill="#fff"/><path d="M3 3.500h10M3 6h10M3 8.500h6" stroke="#232b30"/></svg><b>3</b></div>
      <i class="desk"></i>
    </div>
  </footer>
</div>
</body>
</html>
```
FILE: styles.css
```
* { box-sizing: border-box; margin: 0; padding: 0; }
body { width: 1920px; height: 1080px; overflow: hidden; font: 12px/18px "Liberation Sans", Arial, sans-serif; color: #333; background: #fff; }
.defs { position: absolute; }
svg { display: block; flex: none; overflow: visible; }
i, em { font-style: normal; }
button { font: inherit; color: inherit; border: 0; background: none; }
.window { display: flex; flex-direction: column; height: 1080px; }

/* title and menus */
.titlebar { display: flex; height: 22px; padding: 0 5px 0 7px; background: linear-gradient(#ececec, #fff); }
.app-icon { margin-top: 4px; }
.title { margin-left: 8px; font-size: 13.33px; line-height: 23px; color: #222; }
.tablet { margin: 5px 0 0 auto; }
.winbtns { margin: 4px 0 0 127px; }
.menubar { display: flex; height: 29px; padding-left: 20px; font-weight: bold; line-height: 30px; color: #1b4355; background: linear-gradient(#fff, #f1f1f1); border-bottom: 1px solid #bdbdbd; }
.m-file { width: 41px; } .m-edit { width: 43px; } .m-view { width: 47px; } .m-find { width: 45px; } .m-tools { width: 51px; } .m-game { width: 53px; }

/* toolbar */
.toolbar { display: flex; align-items: flex-start; height: 33px; padding: 4px 0 0 10px; background: linear-gradient(#e6e6e6, #d7d7d7); border-bottom: 1px solid #bdbdbd; }
.tbtn { display: flex; align-items: center; justify-content: center; width: 30px; height: 25px; margin-right: 10px; border: 1px solid #8f8f8f; border-radius: 4px; background: linear-gradient(#fff, #f1f1f1); }
.sep { width: 2px; height: 25px; margin-right: 11px; border-left: 1px solid #aaa; border-right: 1px solid #f4f4f4; }
.sep2 { margin: 0 10px; }
.tgroup { display: flex; height: 25px; border: 1px solid #8f8f8f; border-radius: 4px; background: linear-gradient(#fff, #f1f1f1); }
.tgroup button { display: flex; align-items: center; justify-content: center; width: 30px; border-right: 1px solid #aaa; }
.tgroup button:nth-child(5) { width: 27px; }
.tgroup button:last-child { border: 0; width: 28px; }
.tgroup .on { width: 33px; margin: -1px 0 -1px -1px; background: linear-gradient(#6d93e6, #527bd6); border: 1px solid #3b5ca8; }
.tgroup .on svg { margin-left: -2px; }

.body { display: flex; height: 956px; }

/* left panes */
.left { display: flex; flex-direction: column; width: 389px; border-right: 1px solid #a5a5a5; }
.lhead { height: 24px; padding-left: 5px; font-weight: bold; line-height: 24px; color: #858585; background: linear-gradient(#fff, #f1f1f1); border-bottom: 1px solid #c6c6c6; }
.lhead.rec { height: 25px; line-height: 26px; }
.list { list-style: none; background: repeating-linear-gradient(#fff 0 18px, #f3f7fb 18px 36px); }
.list li { display: flex; align-items: center; height: 18px; }
.collections { height: 560px; }
.collections li { padding-left: 1px; gap: 3px; }
.collections .sel { background: #d6d6d6; }
.records { flex: 1; }
.tri { margin: 0 2px 0 8px; }
.tri + svg { margin-right: 3px; }
.leaf { padding-left: 33px; gap: 3px; }
.leaf svg { margin-top: -1px; }
.records .cur { background: #557ed8; }
.hsplit { flex: none; height: 10px; background: linear-gradient(#fbfbfb, #dedede); border-top: 1px solid #9d9d9d; border-bottom: 1px solid #9d9d9d; }
.vsplit { width: 9px; background: linear-gradient(90deg, #dedede, #fafafa); border-right: 1px solid #9d9d9d; }

/* right pane */
.main { display: flex; flex-direction: column; width: 1511px; border-right: 1px solid #b5b5b5; background: #fff; }
.sect { display: flex; align-items: center; flex: none; gap: 3px; height: 24px; padding-left: 4px; font-size: 13.33px; color: #222; background: linear-gradient(#f8f8f8, #dcdcdc); border-bottom: 1px solid #9d9d9d; }
.sect svg { margin-top: -1px; }
.general { display: flex; height: 35px; padding: 6px 0 0 5px; color: #222; border-bottom: 1px solid #9d9d9d; }
.general label { line-height: 21px; }
.general .g-name { width: 75px; line-height: 26px; }
.general .g-trig { width: 75px; margin-left: 5px; line-height: 26px; }
.input { width: 255px; height: 23px; padding-left: 5px; line-height: 22px; color: #111; border: 1px solid #a5a5a5; border-top-width: 2px; border-radius: 4px; }
.select { display: flex; justify-content: space-between; width: 255px; height: 25px; margin-top: -1px; padding-left: 4px; font-weight: bold; line-height: 24px; color: #555; border: 1px solid #a9a9a9; border-radius: 4px; background: linear-gradient(#fdfdfd, #e4e4e4); }
.select b { display: flex; align-items: center; justify-content: center; width: 24px; margin: -1px; border: 1px solid #3d63bb; border-radius: 0 4px 4px 0; background: linear-gradient(#6f96ec, #4c78d8); }
.select.off { color: #999; border-color: #c4c4c4; }
.select.off b { background: none; border-color: #c4c4c4; }
.cb { position: relative; width: 15px; height: 15px; margin: 4px 0 0 5px; border: 1px solid #999; border-bottom-width: 2px; border-radius: 3px; background: linear-gradient(#fff, #e9e9e9); }
.cb svg { position: absolute; left: -3px; top: -5px; }
.cb + label { margin-left: 7px; }
.cb + .g-cond { width: 103px; margin-left: 6px; }
.g-run { width: 85px; } .g-auto { width: 85px; } .g-single { width: 85px; }
.thead, .trow { display: flex; }
.thead { flex: none; height: 26px; padding-top: 1px; font-weight: bold; line-height: 26px; color: #858585; background: linear-gradient(#fff, #f2f2f2); border-bottom: 1px solid #c6c6c6; }
.thead span { width: 128px; padding-left: 5px; border-right: 1px solid #b9b9b9; }
.thead span:last-child { flex: 1; }
.tbody { flex: none; height: 124px; background: repeating-linear-gradient(#fff 0 18px, #f3f7fb 18px 36px); border-bottom: 1px solid #9d9d9d; }
.trow { height: 18px; background: #d6d6d6; }
.trow span { width: 128px; padding-left: 6px; }

/* scene commands */
.scene { display: flex; flex: none; height: 554px; background: #fffef8; overflow: hidden; }
.blocks { display: flex; flex-direction: column; gap: 8px; width: 1493px; padding: 8px; }
.blk { flex: none; height: 32px; border-radius: 5px; background: #afb7cb; color: #3c5190; font: 12px/20px "DejaVu Sans Condensed", "DejaVu Sans", sans-serif; letter-spacing: -.06px; --chip: #7f8cb1; }
.blk.teal { background: #adc5ca; color: #2f7384; --chip: #7aa4ab; }
.blk.script { height: 54px; }
.blk.msg { height: 80px; }
.blk.picked { box-shadow: inset 0 0 0 1.500px #2f7384; }
.blk p { padding: 12px 0 0 8px; color: #000; }
.blk.script p { padding-top: 8px; }
.line { display: flex; gap: 6px; height: 26px; padding: 6px 0 0 9px; }
.script .line { padding-top: 5px; }
.chev { width: 14px; margin-top: 6px; }
.script .chev { margin-top: 7px; }
.chev.right { margin-top: 2px; }
.cmd { width: 154px; padding: 1px 0 0 11px; color: #000; }
.script .cmd { padding-top: 0; }
.chip { display: flex; align-items: center; height: 20px; padding: 1px 4px 0; border-radius: 4px; background: var(--chip); }
.chip b { margin-left: auto; font-weight: normal; color: #000; white-space: nowrap; }
.chip > svg:first-child { margin: -3px 6px 0 1px; }
.chip u { height: 13px; margin: -2px 0 0 3px; padding-left: 4px; line-height: 17px; text-decoration: none; border-left: 1px solid; }
.snd { margin: -2px 2px 0 7px; }
.w32 { width: 32px; } .w78 { width: 78px; } .w92 { width: 92px; } .w95 { width: 95px; } .w109 { width: 109px; } .w111 { width: 111px; } .w113 { width: 112px; } .w129 { width: 129px; } .w135 { width: 135px; } .w140 { width: 140px; } .w142 { width: 142px; } .w151 { width: 151px; } .w152 { width: 152px; } .w171 { width: 171px; } .w191 { width: 192px; } .w216 { width: 216px; } .w237 { width: 237px; }
.vbar { display: flex; flex-direction: column; align-items: center; width: 17px; padding: 7px 0; background: #f1f1f1; }
.vbar i { width: 13px; height: 306px; margin: 5px 0 auto; background: #c1c1c1; }

/* command palette */
.cmdhead { height: 26px; padding-left: 3px; font-size: 16px; color: #111; }
.cmds { flex: 1; overflow: hidden; color: #2f7384; font-family: "DejaVu Sans Condensed", "DejaVu Sans", sans-serif; }
.icons { display: flex; gap: 8px; padding: 4px 0 0 4px; height: 34px; }
.ic { display: flex; align-items: center; justify-content: center; width: 22px; height: 22px; border-radius: 4px; }
.t { background: #adc8ce; } .p { background: #c4b9ca; } .b { background: #b2b8d4; } .r { background: #d8b8b6; } .y { background: #d6ccb0; } .o { background: #dcbba9; }
.act { border: 1.500px solid #000; }
.letter { font: 22px/22px "Liberation Serif", serif; color: #222; }
.cmds h2 { padding-left: 9px; font-size: 15px; font-weight: normal; font-style: italic; line-height: 20px; letter-spacing: -.22px; background: repeating-linear-gradient(90deg, #2f7384 0 3px, transparent 3px 5px) 0 100% / 100% 1px no-repeat; }
.cat1 { height: 23px; padding-top: 4px; }
.cat2 { height: 22px; padding-top: 3px; }
.btns { display: flex; gap: 8px; padding: 5px 0 0 4px; height: 30px; }
.btns button { height: 24px; padding-top: 1px; border-radius: 4px; background: #adc8ce; color: #000; white-space: nowrap; letter-spacing: -.06px; }
.b60 { width: 60px; } .b80 { width: 80px; } .b87 { width: 87px; } .b69 { width: 69px; } .b31 { width: 31px; } .b43 { width: 43px; }
.outer { flex: 1; padding: 5px 0 3px 1px; background: #fff; border-radius: 8px; box-shadow: inset 1px 0 3px #bbb; }
.outer i { display: block; width: 8px; height: 787px; margin: 6px 0 0 2px; border-radius: 4px; background: #ababab; }

/* taskbar */
.taskbar { display: flex; height: 40px; color: #fff; font-family: "Open Sans", "Noto Sans", sans-serif; background: #232c31; }
.start { display: flex; align-items: center; width: 48px; padding-left: 16px; }
.search { display: flex; align-items: center; width: 344px; padding: 0 15px 0 8px; background: #333; font-size: 14px; color: #a9a9a9; }
.search span { flex: 1; margin-left: 9px; padding-top: 2px; letter-spacing: -.05px; }
.app { position: relative; display: flex; align-items: center; justify-content: center; width: 49px; padding-top: 1px; }
.tv { width: 50px; }
.run::after { content: ""; position: absolute; left: 5px; right: 4px; bottom: 0; height: 2px; background: #86dde8; }
.multi::after { background: linear-gradient(90deg, #86dde8 31px, #5ea6b0 31px); }
.active { background: #4c5356; }
.active::after { left: 0; right: 0; }
.low { margin-top: 3px; }
.tray { display: flex; align-items: center; margin-left: auto; padding-right: 4px; }
.t-help { margin-right: 25px; } .t-people { margin: -2px 22px 0 0; } .t-up { margin-right: 12px; } .t-wifi { margin: 2px 8px 0 0; } .t-snd { margin-right: 9px; } .t-kbd { margin: -1px 14px 0 0; }
.clock { display: flex; flex-direction: column; width: 46px; text-align: center; letter-spacing: -.45px; white-space: nowrap; }
.clock span { margin: 0 -4px; }
.note { position: relative; width: 36px; height: 17px; margin-left: 21px; }
.note b { position: absolute; left: 7px; top: 7px; width: 17px; height: 17px; border: 1px solid #999; border-radius: 50%; background: #434a4e; font-size: 11px; line-height: 15px; text-align: center; }
.desk { width: 1px; height: 40px; background: #7a7f82; }
```
